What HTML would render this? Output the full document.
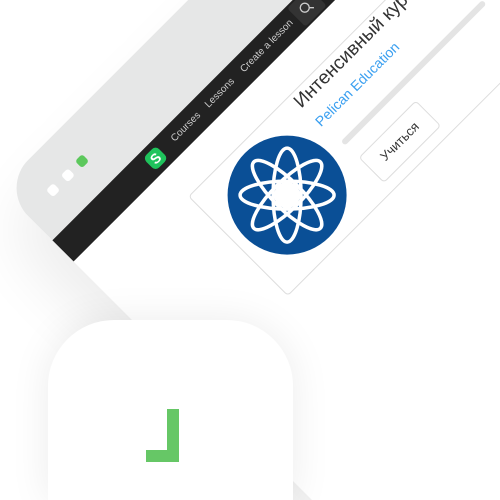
<!DOCTYPE html>
<html><head><meta charset="utf-8"><style>
html,body{margin:0;padding:0;width:500px;height:500px;overflow:hidden;background:#fff;font-family:"Liberation Sans","Noto Sans CJK SC",sans-serif}
#root{position:relative;width:500px;height:500px;overflow:hidden}
.win{position:absolute;left:-0.3px;top:187.7px;width:700px;height:700px;transform-origin:0 0;transform:rotate(-45deg);background:#fff;border-radius:40px 40px 0 0;box-shadow:-30px 30px 60px rgba(0,0,0,.07);overflow:hidden}
.tb{position:absolute;left:0;top:0;width:100%;height:74px;background:#e6e7e7}
.dot{position:absolute;width:10px;height:10px;border-radius:3px;background:#fff;top:34px}
.nav{position:absolute;left:0;top:74px;width:100%;height:30px;background:#222}
.nav span{position:absolute;top:8.5px;font-size:10px;color:#ccc;white-space:nowrap}
.logo{position:absolute;left:122px;top:6px;width:18px;height:18px;border-radius:5px;background:#1fc35c;color:#fff;font-weight:bold;font-size:14px;line-height:18px;text-align:center}
.srch{position:absolute;left:330px;top:2px;width:30px;height:26px;background:#333;border-radius:3px}
.card{position:absolute;left:127px;top:139px;width:560px;height:141px;border:1px solid #ddd;border-radius:4px;box-sizing:border-box}
.title{position:absolute;left:269px;top:141px;font-size:19px;color:#333;white-space:nowrap}
.pel{position:absolute;left:270px;top:171px;font-size:14px;color:#3a9ff0;white-space:nowrap}
.prog{position:absolute;left:274px;top:208px;width:200px;height:6px;border-radius:3px;background:#e4e4e4}
.btn{position:absolute;left:275px;top:232px;width:81px;height:36px;border:1px solid #ddd;border-radius:4px;box-sizing:border-box;font-size:13px;color:#333;text-align:center;line-height:34px}
.sq{position:absolute;left:48px;top:320px;width:245px;height:180px;border-radius:66px 66px 0 0;background:#fff;box-shadow:0 0 40px rgba(0,0,0,.08)}
</style></head><body><div id="root">
<div class="win">
 <div class="tb">
  <div class="dot" style="left:31px"></div>
  <div class="dot" style="left:52px"></div>
  <div class="dot" style="left:72px;background:#5cc85c"></div>
 </div>
 <div class="nav">
  <div class="logo">S</div>
  <span style="left:156px">Courses</span>
  <span style="left:204px">Lessons</span>
  <span style="left:254px">Create a lesson</span>
  <div class="srch"><svg width="30" height="26" viewBox="0 0 30 26"><circle cx="13" cy="12" r="4.5" fill="none" stroke="#ccc" stroke-width="1.3"/><line x1="16.3" y1="15.3" x2="19.5" y2="18.5" stroke="#ccc" stroke-width="1.3"/></svg></div>
 </div>
 <div class="card"></div>
 <svg style="position:absolute;left:138px;top:148px" width="120" height="120" viewBox="-60 -60 120 120">
  <circle r="59.5" fill="#0a4f96"/>
  <g fill="none" stroke="#fff" stroke-width="3.5">
   <ellipse rx="14" ry="47"/>
   <ellipse rx="14" ry="47" transform="rotate(45)"/>
   <ellipse rx="14" ry="47" transform="rotate(90)"/>
   <ellipse rx="14" ry="47" transform="rotate(135)"/>
  </g>
  <circle r="13" fill="#ffffff" stroke="none"/>
 </svg>
 <div class="title">Интенсивный курс</div>
 <div class="pel">Pelican Education</div>
 <div class="prog"></div>
 <div class="btn">Учиться</div>
</div>
<div class="sq"></div>
<div style="position:absolute;left:167px;top:409px;width:12px;height:53px;background:#66c766"></div>
<div style="position:absolute;left:146px;top:450px;width:33px;height:12px;background:#66c766"></div>
</div></body></html>
